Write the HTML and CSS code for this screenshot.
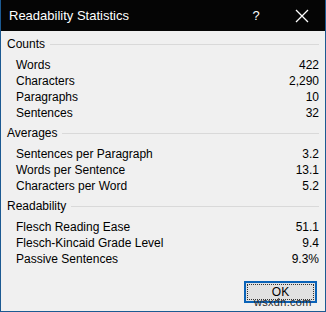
FILE: index.html
```html
<!DOCTYPE html>
<html>
<head>
<meta charset="utf-8">
<link rel="stylesheet" href="styles.css">
</head>
<body>
<div class="window">
  <div class="titlebar">
    <span class="title">Readability Statistics</span>
    <span class="help">?</span>
    <span class="close">
      <svg width="14" height="14" viewBox="0 0 14 14"><path d="M1 1 L13 13 M13 1 L1 13" stroke="#fff" stroke-width="1.3" fill="none"/></svg>
    </span>
  </div>
  <div class="content">
    <section class="group">
      <div class="group-head"><span>Counts</span><span class="rule"></span></div>
      <div class="row"><span>Words</span><span>422</span></div>
      <div class="row"><span>Characters</span><span>2,290</span></div>
      <div class="row"><span>Paragraphs</span><span>10</span></div>
      <div class="row"><span>Sentences</span><span>32</span></div>
    </section>
    <section class="group">
      <div class="group-head"><span>Averages</span><span class="rule"></span></div>
      <div class="row"><span>Sentences per Paragraph</span><span>3.2</span></div>
      <div class="row"><span>Words per Sentence</span><span>13.1</span></div>
      <div class="row"><span>Characters per Word</span><span>5.2</span></div>
    </section>
    <section class="group">
      <div class="group-head"><span>Readability</span><span class="rule"></span></div>
      <div class="row"><span>Flesch Reading Ease</span><span>51.1</span></div>
      <div class="row"><span>Flesch-Kincaid Grade Level</span><span>9.4</span></div>
      <div class="row"><span>Passive Sentences</span><span>9.3%</span></div>
    </section>
    <div class="actions">
      <button class="ok"><span class="focus">OK</span></button>
    </div>
  </div>
  <span class="watermark">wsxdn.com</span>
</div>
</body>
</html>
```
FILE: styles.css
```css
html, body {
  margin: 0;
  padding: 0;
  background: #f0f0f0;
}
.window {
  position: relative;
  width: 326px;
  height: 312px;
  box-sizing: border-box;
  border: 1px solid #1c5a92;
  border-top: none;
  background: #f0f0f0;
  font-family: "Liberation Sans", Arial, sans-serif;
  font-size: 12px;
  color: #000;
  display: flex;
  flex-direction: column;
}
.titlebar {
  height: 31px;
  background: #050505;
  color: #fff;
  display: flex;
  align-items: center;
  font-size: 13px;
}
.title {
  padding-left: 8px;
  flex: 1;
}
.help {
  width: 46px;
  text-align: center;
  font-size: 13px;
}
.close {
  width: 46px;
  display: flex;
  justify-content: center;
  align-items: center;
}
.content {
  padding: 5px 6px 0 6px;
  display: flex;
  flex-direction: column;
}
.group {
  margin-bottom: 4px;
}
.group-head {
  height: 16px;
  line-height: 16px;
  display: flex;
  align-items: center;
  margin-bottom: 5px;
}
.rule {
  flex: 1;
  height: 1px;
  background: #d9d9d9;
  margin-left: 5px;
}
.row {
  height: 16px;
  line-height: 16px;
  display: flex;
  justify-content: space-between;
  padding-left: 9px;
}
.actions {
  display: flex;
  justify-content: flex-end;
  margin-top: 10px;
  padding-right: 2px;
}
.ok {
  width: 73px;
  height: 22px;
  box-sizing: border-box;
  border: 2px solid #0a63b8;
  background: #e1e1e1;
  padding: 1px;
  font-family: inherit;
  font-size: 12px;
  color: #000;
  display: flex;
}
.focus {
  flex: 1;
  border: 1px dotted #333;
  display: flex;
  align-items: center;
  justify-content: center;
}
.watermark {
  position: absolute;
  left: 253px;
  top: 296px;
  font-size: 11px;
  color: #2a2a2a;
  letter-spacing: 0.3px;
}
```
